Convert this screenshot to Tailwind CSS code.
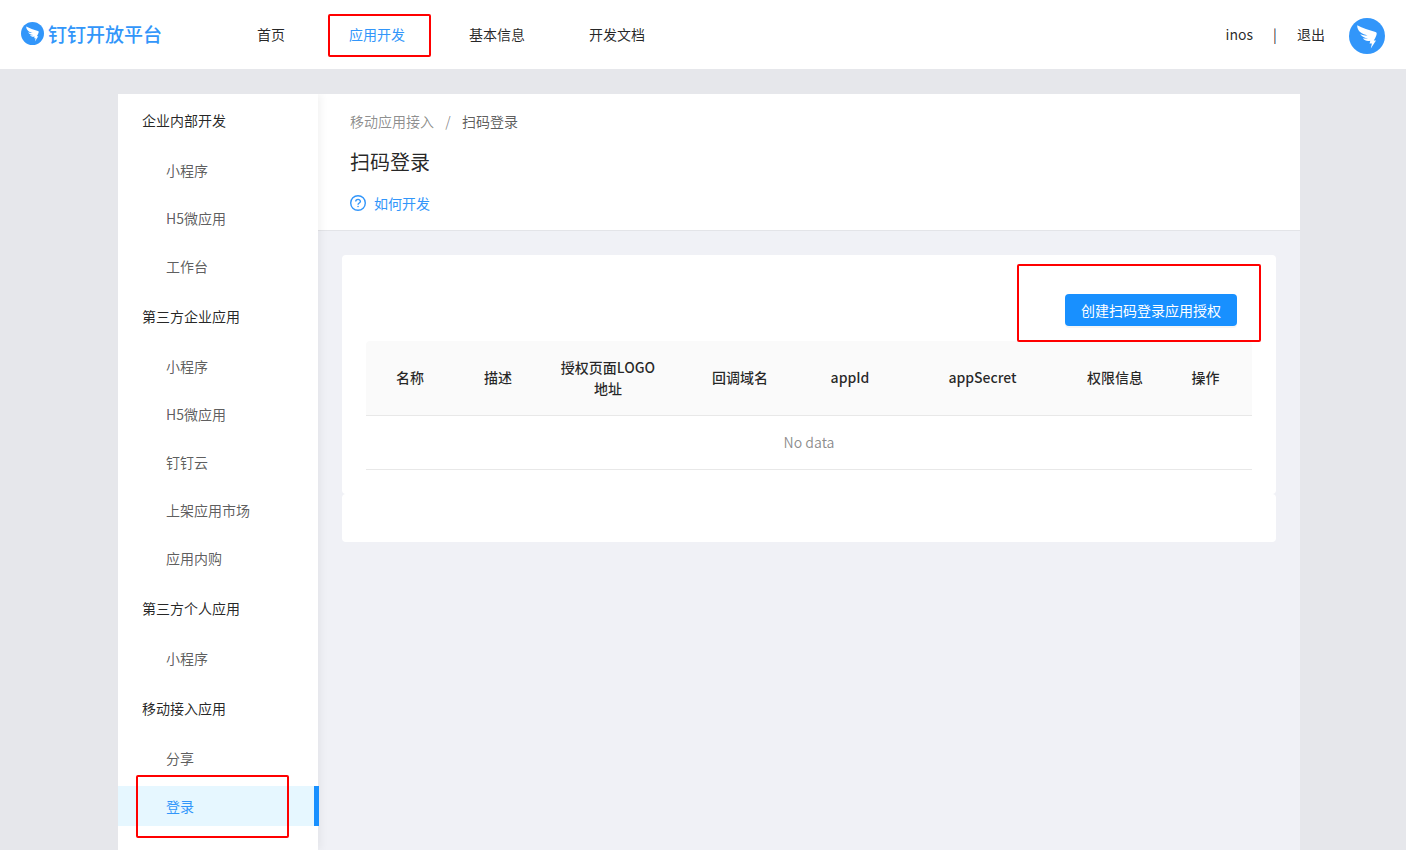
<!DOCTYPE html>
<html lang="zh-CN">
<head>
<meta charset="utf-8">
<meta name="viewport" content="width=device-width, initial-scale=1">
<title>钉钉开放平台</title>
<script src="https://cdn.jsdelivr.net/npm/@tailwindcss/browser@4"></script>
</head>
<body class="relative flex min-h-screen flex-col bg-[#e6e7eb] font-['Noto_Sans_CJK_SC',sans-serif] text-sm text-black/85">

<header class="flex h-[69px] shrink-0 items-center bg-white px-[21px] pb-0.5">
  <a href="#" class="flex w-[204px] items-center gap-1 text-[#3296fa]" aria-label="钉钉开放平台">
    <svg class="size-[23px] shrink-0" viewBox="0 0 36 36" aria-hidden="true">
      <circle cx="18" cy="18" r="18" fill="#3296fa"/>
      <path fill="#fff" d="M8.2 7.2C13.500 10.300 20 12 26.500 14.100C28 14.700 27.900 16 27.300 17.400C26.600 19.300 25.700 20.900 24.800 22.400H27L21.800 30.500L22.900 25.500H20.600L21.300 22.800C18 23.600 15.700 22.700 13.800 20.300C15.600 20.700 17.300 20.700 19 20.300C15.600 19.900 12.800 18.700 11.200 15.900C13.500 16.900 16 17.400 18.500 17.400C13.500 16 8 13.600 8.200 7.200Z"/>
    </svg>
    <span class="text-[19px] leading-6 font-medium">钉钉开放平台</span>
  </a>
  <nav class="flex">
    <a href="#" class="px-8 leading-6">首页</a>
    <a href="#" class="relative px-8 leading-6 text-[#3296fa]">应用开发<span class="absolute -top-2 left-[11px] h-[43px] w-[103px] rounded-xs border-2 border-[#f00]"></span></a>
    <a href="#" class="px-8 leading-6">基本信息</a>
    <a href="#" class="px-8 leading-6">开发文档</a>
  </nav>
  <div class="ml-auto flex items-center">
    <span>inos</span>
    <span class="w-11 text-center">|</span>
    <a href="#">退出</a>
    <svg class="mt-[5px] ml-6 size-9" viewBox="0 0 36 36" role="img" aria-label="头像">
      <circle cx="18" cy="18" r="18" fill="#3296fa"/>
      <path fill="#fff" d="M8.2 7.2C13.500 10.300 20 12 26.500 14.100C28 14.700 27.900 16 27.300 17.400C26.600 19.300 25.700 20.900 24.800 22.400H27L21.800 30.500L22.900 25.500H20.600L21.300 22.800C18 23.600 15.700 22.700 13.800 20.300C15.600 20.700 17.300 20.700 19 20.300C15.600 19.900 12.800 18.700 11.200 15.900C13.500 16.900 16 17.400 18.500 17.400C13.500 16 8 13.600 8.200 7.200Z"/>
    </svg>
  </div>
</header>

<div class="mt-[25px] mr-[106px] ml-[118px] flex grow overflow-hidden">
  <aside class="relative z-10 w-[200px] shrink-0 bg-white shadow-[3px_0_8px_rgba(0,0,0,0.05)]">
    <nav class="leading-10 text-black/65">
      <h2 class="px-6 leading-[52px] text-black/85">企业内部开发</h2>
      <a href="#" class="my-1 block px-12">小程序</a>
      <a href="#" class="mt-2 block px-12">H5微应用</a>
      <a href="#" class="mt-2 mb-1 block px-12">工作台</a>
      <h2 class="px-6 leading-[52px] text-black/85">第三方企业应用</h2>
      <a href="#" class="my-1 block px-12">小程序</a>
      <a href="#" class="mt-2 block px-12">H5微应用</a>
      <a href="#" class="mt-2 block px-12">钉钉云</a>
      <a href="#" class="mt-2 block px-12">上架应用市场</a>
      <a href="#" class="mt-2 mb-1 block px-12">应用内购</a>
      <h2 class="px-6 leading-[52px] text-black/85">第三方个人应用</h2>
      <a href="#" class="my-1 block px-12">小程序</a>
      <h2 class="px-6 leading-[52px] text-black/85">移动接入应用</h2>
      <a href="#" class="my-1 block px-12">分享</a>
      <a href="#" class="relative mt-2 -mr-px block border-r-5 border-[#1890ff] bg-[#e6f7ff] px-12 text-[#3296fa]">登录<span class="absolute -top-[11px] left-[18px] h-[63px] w-[153px] rounded-xs border-2 border-[#f00]"></span></a>
    </nav>
  </aside>

  <main class="min-w-0 grow bg-[#f0f1f6]">
    <div class="h-[137px] border-b border-[#e3e4e8] bg-white px-8 pt-4">
      <nav class="flex leading-[22px] text-black/45">
        <a href="#">移动应用接入</a>
        <span class="w-7 text-center">/</span>
        <span class="text-black/65">扫码登录</span>
      </nav>
      <h1 class="mt-3.5 text-xl leading-8">扫码登录</h1>
      <a href="#" class="mt-3.5 flex items-center gap-2 leading-[22px] text-[#3296fa]">
        <svg class="size-4" viewBox="0 0 16 16" fill="none" stroke="currentColor" stroke-width="1.400" aria-hidden="true">
          <circle cx="8" cy="8" r="7.300"/>
          <path d="M5.700 6.600C5.700 3.700 10.400 3.700 10.400 6.500C10.400 8 8.050 8 8.050 9.700"/>
          <circle cx="8.050" cy="11.500" r=".8" fill="currentColor" stroke="none"/>
        </svg>
        如何开发
      </a>
    </div>

    <div class="p-6">
      <section class="rounded bg-white px-6 pt-[39px] pb-6">
        <div class="flex justify-end pr-[15px]">
          <button type="button" class="relative h-8 rounded bg-[#1890ff] px-4 text-white shadow-[0_2px_0_rgba(0,0,0,0.04)]">创建扫码登录应用授权<span class="absolute -top-[30px] -left-12 h-[78px] w-[244px] rounded-xs border-2 border-[#f00]"></span></button>
        </div>
        <table class="mt-[15px] w-full table-fixed border-separate border-spacing-0 text-center">
          <colgroup>
            <col class="w-[88px]"><col class="w-[88px]"><col class="w-[132px]"><col class="w-[132px]"><col class="w-[88px]"><col class="w-[177px]"><col class="w-[88px]"><col>
          </colgroup>
          <thead class="leading-[21px]">
            <tr class="h-[75px] *:border-b *:border-[#e8e8e8] *:bg-[#fafafa] *:px-4 *:pb-px *:font-medium">
              <th scope="col" class="rounded-tl">名称</th>
              <th scope="col">描述</th>
              <th scope="col">授权页面LOGO地址</th>
              <th scope="col">回调域名</th>
              <th scope="col">appId</th>
              <th scope="col">appSecret</th>
              <th scope="col">权限信息</th>
              <th scope="col" class="rounded-tr">操作</th>
            </tr>
          </thead>
          <tbody>
            <tr class="h-[54px]"><td colspan="8" class="border-b border-[#e8e8e8] pb-0.5 text-black/45">No data</td></tr>
          </tbody>
        </table>
      </section>
      <section class="h-12 rounded bg-white"></section>
    </div>
  </main>
</div>
</body>
</html>
